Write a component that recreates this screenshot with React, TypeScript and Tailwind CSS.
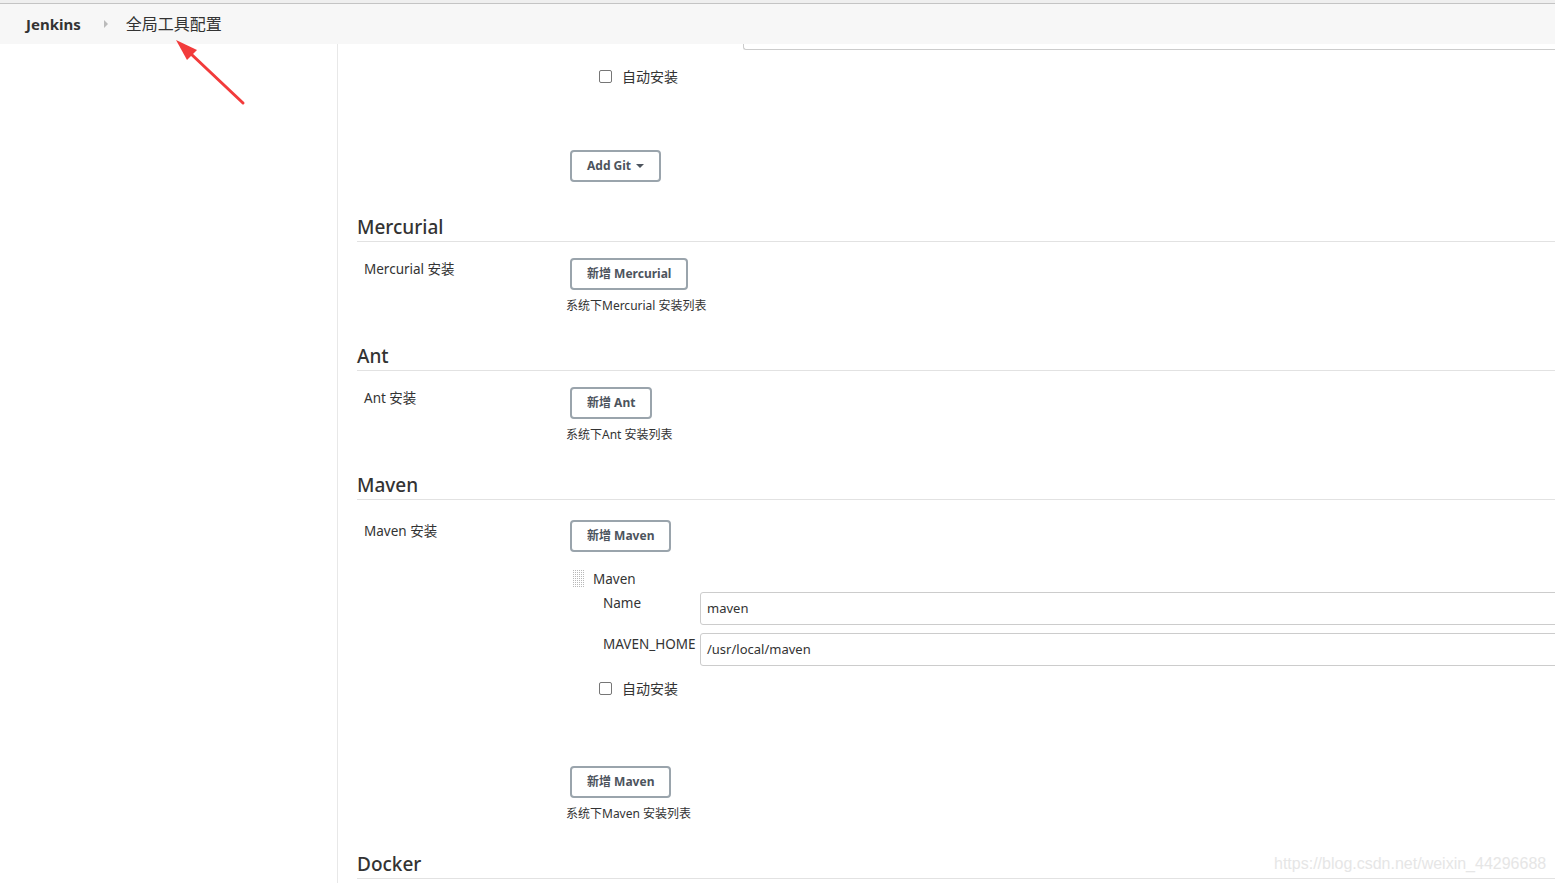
import React from 'react';

const FONT = "font-['Noto_Sans','Noto_Sans_CJK_SC',sans-serif]";

function Heading({ title, className = '' }: { title: string; className?: string }) {
  return (
    <div className={`h-[30px] border-b border-[#e2e2e2] text-[19px] font-medium leading-[30px] text-[#333] ${className}`}>
      {title}
    </div>
  );
}

function Btn({ children }: { children: React.ReactNode }) {
  return (
    <button className="ml-[4px] h-[32px] px-[15px] border-2 border-[#9aa4ac] rounded-[4px] bg-white text-[12px] font-bold text-[#4d545d] flex items-center gap-[5px]">
      {children}
    </button>
  );
}

function Desc({ text }: { text: string }) {
  return <div className="mt-[8px] text-[12px] leading-[16px] text-[#333]">{text}</div>;
}

function Check({ label, className = '' }: { label: string; className?: string }) {
  return (
    <div className={`h-[20px] flex items-center gap-[10px] ${className}`}>
      <span className="w-[13px] h-[13px] border border-[#767676] rounded-[2px] bg-white" />
      <span className="text-[14px] text-[#333]">{label}</span>
    </div>
  );
}

function Row({ label, className = '', children }: { label: string; className?: string; children: React.ReactNode }) {
  return (
    <div className={`flex ${className}`}>
      <div className="w-[209px] shrink-0 pl-[7px] text-[13.5px] leading-[22px] text-[#333]">{label}</div>
      <div className="flex-1 min-w-0">{children}</div>
    </div>
  );
}

function Field({ label, value, className = '' }: { label: string; value: string; className?: string }) {
  return (
    <div className={`flex pl-[37px] ${className}`}>
      <div className="w-[97px] shrink-0 text-[13.5px] leading-[22px] text-[#333] whitespace-nowrap">{label}</div>
      <div className="flex-1 h-[33px] border border-[#ccc] rounded-[3px] px-[6px] flex items-center text-[13px] text-[#333]">
        {value}
      </div>
    </div>
  );
}

function DragHandle() {
  return (
    <svg width="12" height="18" viewBox="0 0 12 18">
      <defs>
        <pattern id="dots" width="2" height="2" patternUnits="userSpaceOnUse">
          <rect width="1" height="1" fill="#b8b8b8" />
        </pattern>
      </defs>
      <rect width="12" height="18" fill="url(#dots)" />
    </svg>
  );
}

export default function App() {
  return (
    <div className={`relative w-[1555px] h-[883px] overflow-hidden bg-white flex flex-col ${FONT}`}>
      {/* breadcrumb header */}
      <div className="h-[3px] bg-[#efefef]" />
      <div className="h-px bg-[#c4c4c4]" />
      <div className="h-[40px] bg-[#f7f7f7] flex items-center pl-[26px]">
        <span className="text-[15px] font-bold text-[#333]">Jenkins</span>
        <span className="ml-[23px] w-0 h-0 border-y-[4px] border-y-transparent border-l-[4px] border-l-[#bbb]" />
        <span className="ml-[18px] text-[16px] text-[#333]">全局工具配置</span>
      </div>

      <div className="flex flex-1 min-h-0">
        <div className="w-[338px] shrink-0 border-r border-[#e8e8e8]" />
        <div className="flex-1 min-w-0 pl-[19px] -mr-[8px]">
          {/* tail of the previous Git input */}
          <div className="ml-[386px] h-[6px] border-l border-b border-[#ccc] rounded-bl-[3px]" />
          <Check label="自动安装" className="mt-[16px] pl-[242px]" />
          <div className="mt-[64px] ml-[209px]">
            <Btn>
              Add Git
              <span className="w-0 h-0 border-x-[4px] border-x-transparent border-t-[4px] border-t-[#4d545d]" />
            </Btn>
          </div>

          <Heading title="Mercurial" className="mt-[30px]" />
          <Row label="Mercurial 安装" className="mt-[16px]">
            <div className="flex"><Btn>新增 Mercurial</Btn></div>
            <Desc text="系统下Mercurial 安装列表" />
          </Row>

          <Heading title="Ant" className="mt-[27px]" />
          <Row label="Ant 安装" className="mt-[16px]">
            <div className="flex"><Btn>新增 Ant</Btn></div>
            <Desc text="系统下Ant 安装列表" />
          </Row>

          <Heading title="Maven" className="mt-[27px]" />
          <Row label="Maven 安装" className="mt-[20px]">
            <div className="flex"><Btn>新增 Maven</Btn></div>
            <div className="mt-[18px] h-[18px] flex items-center pl-[7px] gap-[8px]">
              <DragHandle />
              <span className="text-[13.5px] text-[#333]">Maven</span>
            </div>
            <Field label="Name" value="maven" className="mt-[4px]" />
            <Field label="MAVEN_HOME" value="/usr/local/maven" className="mt-[8px]" />
            <Check label="自动安装" className="mt-[12px] pl-[33px]" />
            <div className="flex mt-[68px]"><Btn>新增 Maven</Btn></div>
            <Desc text="系统下Maven 安装列表" />
          </Row>

          <Heading title="Docker" className="mt-[27px]" />
        </div>
      </div>

      {/* annotation arrow */}
      <svg className="absolute left-0 top-0" width="260" height="120" viewBox="0 0 260 120">
        <line x1="243" y1="103" x2="190" y2="53" stroke="#f23b3b" strokeWidth="3" strokeLinecap="round" />
        <polygon points="176,40 197,50 187,60" fill="#f23b3b" />
      </svg>

      {/* watermark */}
      <div className="absolute left-[1274px] top-[854px] text-[16px] leading-[20px] text-[#e6e6e6] font-['Liberation_Sans',sans-serif]">
        https://blog.csdn.net/weixin_44296688
      </div>
    </div>
  );
}
